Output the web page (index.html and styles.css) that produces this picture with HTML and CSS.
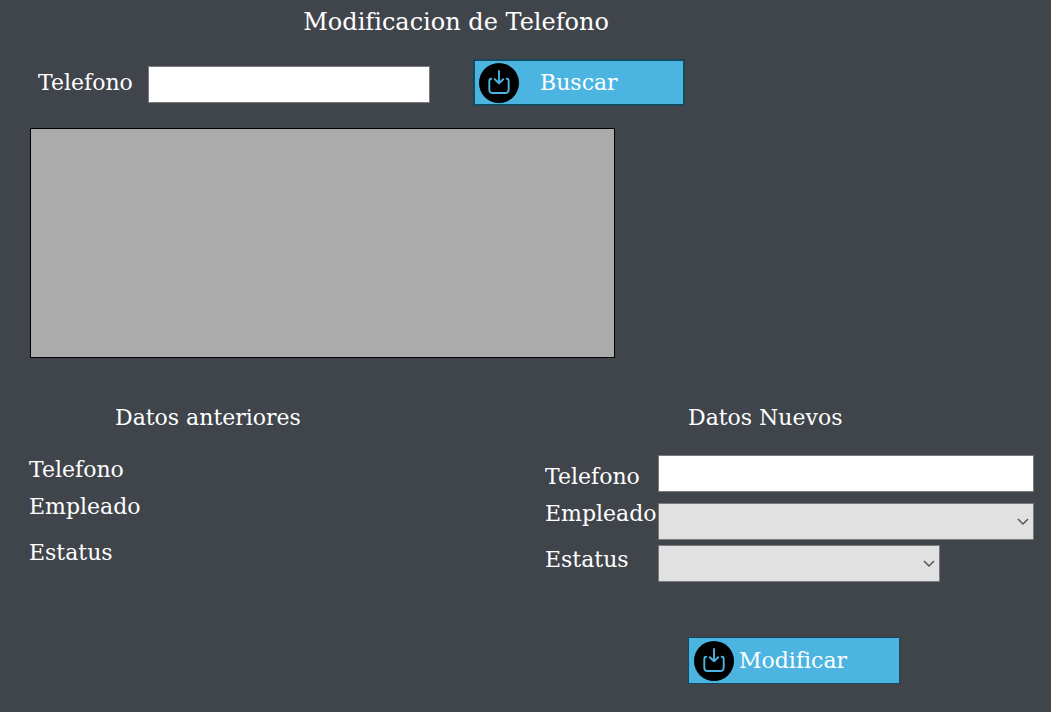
FILE: index.html
```html
<!DOCTYPE html>
<html lang="es">
<head>
<meta charset="utf-8">
<meta name="viewport" content="width=device-width, initial-scale=1">
<title>Modificacion de Telefono</title>
<link rel="stylesheet" href="styles.css">
</head>
<body>
<svg class="sprite" aria-hidden="true">
  <symbol id="save" viewBox="0 0 40 40">
    <circle cx="20" cy="20" r="20" fill="#000"/>
    <path d="M12.300 15.800q-2 0-2 2.500v8.200q0 3.500 3.500 3.500h12.400q3.500 0 3.500-3.500v-8.200q0-2.500-2-2.500M20 8v12M15.800 16.200L20 20.300l4.200-4.100" fill="none" stroke="#4cb4e1" stroke-width="1.900" stroke-linecap="round" stroke-linejoin="round"/>
  </symbol>
</svg>
<main class="page">
  <h1 class="title">Modificacion de Telefono</h1>
  <form class="search">
    <label for="buscar-telefono">Telefono</label>
    <input class="field" id="buscar-telefono" type="text">
    <button class="button button-default" type="button">
      <svg class="icon" aria-hidden="true"><use href="#save"/></svg>
      <span class="button-text">Buscar</span>
    </button>
  </form>
  <div class="results" role="region" aria-label="Resultados"></div>
  <div class="details">
    <section class="previous">
      <h2 class="heading">Datos anteriores</h2>
      <div class="labels">
        <span class="caption">Telefono</span>
        <span class="caption">Empleado</span>
        <span class="caption caption-last">Estatus</span>
      </div>
    </section>
    <form class="new">
      <h2 class="heading">Datos Nuevos</h2>
      <div class="form">
        <div class="labels labels-form">
          <label class="caption" for="telefono">Telefono</label>
          <label class="caption" for="empleado">Empleado</label>
          <label class="caption caption-last" for="estatus">Estatus</label>
        </div>
        <div class="fields">
          <input class="field" id="telefono" type="text">
          <div class="combo">
            <select class="field select" id="empleado"><option></option></select>
            <svg class="chevron" viewBox="0 0 12 8" aria-hidden="true"><path d="M1 1l5 5 5-5"/></svg>
          </div>
          <div class="combo combo-short">
            <select class="field select" id="estatus"><option></option></select>
            <svg class="chevron" viewBox="0 0 12 8" aria-hidden="true"><path d="M1 1l5 5 5-5"/></svg>
          </div>
        </div>
      </div>
      <button class="button submit" type="button">
        <svg class="icon" aria-hidden="true"><use href="#save"/></svg>
        <span>Modificar</span>
      </button>
    </form>
  </div>
</main>
</body>
</html>
```

FILE: styles.css
```css
* {
  box-sizing: border-box;
}

body {
  margin: 0;
  background: #40454b;
  color: #fff;
  font: 22px/28px Rockwell, "DejaVu Serif", serif;
}

.sprite {
  position: absolute;
  width: 0;
  height: 0;
}

.page {
  padding: 8px 17px 24px 29px;
}

.title {
  width: 85%;
  margin: 0 0 23px;
  font-size: 24px;
  font-weight: 400;
  text-align: center;
}

.search {
  display: grid;
  grid-template-columns: 110px 282fr 43px 212px 349fr;
  align-items: center;
  padding-left: 9px;
}

.field {
  display: block;
  width: 100%;
  height: 37px;
  margin: 0;
  padding: 0 8px;
  border: 1px solid #7a7a7a;
  border-radius: 0;
  background: #fff;
  color: #000;
  font: inherit;
}

.search .field {
  margin-top: 4px;
}

.button {
  display: flex;
  align-items: center;
  gap: 5px;
  width: 212px;
  height: 47px;
  padding: 0 5px;
  border: 1px solid #134a5e;
  background: #4cb4e1;
  color: #fff;
  font: inherit;
}

.button-default {
  grid-column: 4;
  padding: 0 4px;
  border-width: 2px;
}

.button-text {
  padding-left: 16px;
}

.icon {
  flex: none;
  width: 40px;
  height: 40px;
}

.results {
  width: calc(58% + 2px);
  height: 230px;
  margin: 22px 0 46px 1px;
  border: 1px solid #000;
  background: #ababab;
}

.details {
  display: grid;
  grid-template-columns: 516fr 489fr;
}

.heading {
  margin: 0;
  font-size: 22px;
  font-weight: 400;
}

.previous .heading {
  padding-left: 86px;
}

.new .heading {
  padding-left: 143px;
}

.labels {
  display: flex;
  flex-direction: column;
  gap: 9px;
  padding-top: 24px;
}

.labels-form {
  padding-top: 8px;
}

.caption-last {
  margin-top: 9px;
}

.form {
  display: grid;
  grid-template-columns: 113px 1fr;
  padding-top: 23px;
}

.fields {
  display: flex;
  flex-direction: column;
}

.combo {
  position: relative;
  margin-top: 11px;
}

.combo-short {
  width: 75%;
  margin-top: 5px;
}

.select {
  appearance: none;
  background: #e1e1e1;
}

.chevron {
  position: absolute;
  top: 15px;
  right: 5px;
  width: 12px;
  height: 8px;
  fill: none;
  stroke: #555;
  stroke-width: 1.500;
  pointer-events: none;
}

.submit {
  margin: 55px 0 0 143px;
}
```
